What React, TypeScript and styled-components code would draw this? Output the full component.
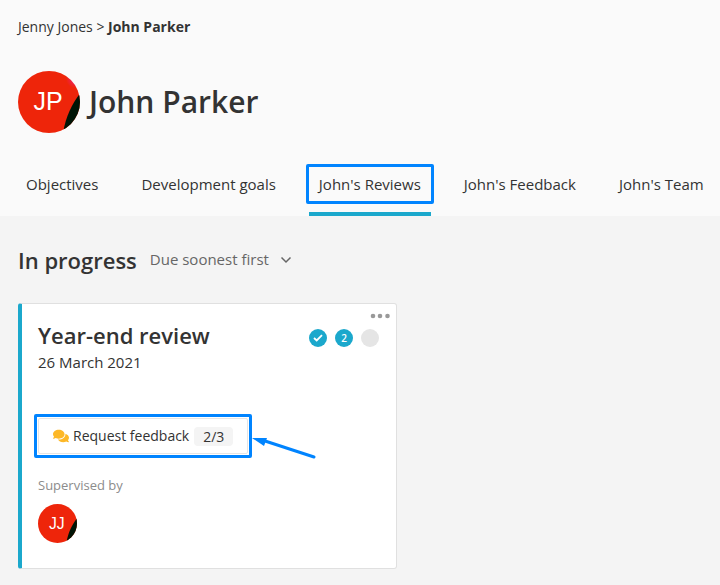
import React from "react";
import styled, { createGlobalStyle } from "styled-components";
import { FaComments } from "react-icons/fa";

const teal = "#1ba8cc";
const marker = "#0084ff";
const ink = "#333333";

const GlobalStyle = createGlobalStyle`
  *, *::before, *::after { box-sizing: border-box; }
  body {
    margin: 0;
    background: #f4f4f4;
    color: ${ink};
    font-family: "Open Sans", "Noto Sans", sans-serif;
    font-size: 15px;
    line-height: 20px;
  }
  h1, h2, h3, p, ol, ul { margin: 0; padding: 0; }
  button { font: inherit; color: inherit; }
`;

const Header = styled.header`
  background: #fafafa;
  padding: 17px 18px 0;
`;

const Breadcrumb = styled.nav`
  font-size: 14px;
  white-space: nowrap;

  a {
    color: inherit;
    text-decoration: none;
  }

  strong {
    font-weight: 700;
  }
`;

const Profile = styled.div`
  display: flex;
  align-items: center;
  gap: 9px;
  margin-top: 34px;
`;

const AvatarFrame = styled.span<{ $size: number }>`
  display: block;
  flex: none;
  width: ${(p) => p.$size}px;
  height: ${(p) => p.$size}px;

  svg {
    display: block;
    width: 100%;
    height: 100%;
  }

  text {
    font-family: "Liberation Sans", Arial, sans-serif;
    fill: #ffffff;
    text-anchor: middle;
  }
`;

const Name = styled.h1`
  font-size: 30px;
  line-height: 40px;
  font-weight: 600;
`;

const Tabs = styled.nav`
  display: flex;
  gap: 23px;
  margin: 31px 0 0 -2px;
  white-space: nowrap;
`;

const Tab = styled.a<{ $active?: boolean }>`
  position: relative;
  padding: 10px 10px 18px;
  border-bottom: 4px solid ${(p) => (p.$active ? teal : "transparent")};
  color: inherit;
  text-decoration: none;
`;

const Highlight = styled.span<{ $bottom: number; $top: number; $side: number }>`
  position: absolute;
  top: ${(p) => p.$top}px;
  bottom: ${(p) => p.$bottom}px;
  left: ${(p) => p.$side}px;
  right: ${(p) => p.$side}px;
  border: 3px solid ${marker};
  border-radius: 2px;
  pointer-events: none;
`;

const Content = styled.main`
  padding: 29px 18px 16px;
`;

const SectionHead = styled.div`
  display: flex;
  align-items: center;
  gap: 13px;
`;

const SectionTitle = styled.h2`
  font-size: 22px;
  line-height: 30px;
  font-weight: 600;
`;

const SortButton = styled.button`
  display: flex;
  align-items: center;
  gap: 11px;
  padding: 0 0 2px;
  border: 0;
  background: none;
  color: #666666;

  svg {
    position: relative;
    top: 1px;
  }
`;

const Card = styled.article`
  position: relative;
  max-width: 379px;
  margin-top: 28px;
  padding: 16px 16px 25px;
  border: 1px solid #e0e0e0;
  border-left: 4px solid ${teal};
  border-radius: 3px;
  background: #ffffff;
`;

const CardHead = styled.div`
  display: flex;
  justify-content: space-between;
  align-items: center;
`;

const CardTitle = styled.h3`
  font-size: 22px;
  line-height: 30px;
  font-weight: 600;
`;

const Steps = styled.ol`
  display: flex;
  gap: 8px;
  padding: 5px 1px 0 0;
  list-style: none;
`;

const Step = styled.li<{ $pending?: boolean }>`
  display: grid;
  place-items: center;
  width: 18px;
  height: 18px;
  border-radius: 50%;
  background: ${(p) => (p.$pending ? "#e5e5e5" : teal)};
  color: #ffffff;
  font-size: 10px;
  font-weight: 600;
  line-height: 18px;
`;

const MenuButton = styled.button`
  position: absolute;
  top: 9px;
  right: 6px;
  padding: 0;
  border: 0;
  background: none;

  svg {
    display: block;
  }
`;

const DueDate = styled.p`
  margin-top: 2px;
`;

const FeedbackRow = styled.div`
  position: relative;
  width: max-content;
  margin-top: 46px;
`;

const FeedbackButton = styled.button`
  display: flex;
  align-items: center;
  gap: 4px;
  height: 36px;
  padding: 0 14px;
  border: 1px solid #e5e5e5;
  border-radius: 2px;
  background: #ffffff;
  font-size: 14px;
`;

const Count = styled.span`
  margin-left: 1px;
  padding: 0 9px;
  border-radius: 4px;
  background: #f4f4f4;
  line-height: 19px;
`;

const Arrow = styled.svg`
  position: absolute;
  left: 100%;
  top: 16px;
  margin-left: 4px;
  pointer-events: none;
`;

const Supervised = styled.p`
  margin: 21px 0 9px;
  color: #8c8c8c;
  font-size: 13px;
`;

function Avatar({ initials, size, glow }: { initials: string; size: number; glow?: boolean }) {
  const id = `clip-${initials}`;
  return (
    <AvatarFrame $size={size}>
      <svg viewBox="0 0 62 62" role="img" aria-label={initials}>
        <defs>
          <clipPath id={id}>
            <circle cx="31" cy="31" r="31" />
          </clipPath>
          <radialGradient id={`${id}-edge`} cx="57" cy="8" r="9" gradientUnits="userSpaceOnUse">
            <stop offset="0" stopColor="#f0207a" />
            <stop offset="1" stopColor="#ee250a" />
          </radialGradient>
        </defs>
        <g clipPath={`url(#${id})`}>
          <rect width="62" height="62" fill={glow ? `url(#${id}-edge)` : "#ee250a"} />
          <path d="M64 20C55 31 48 44 45 62H64Z" fill="#001405" />
        </g>
        <text x="30" y="39" fontSize="25">
          {initials}
        </text>
      </svg>
    </AvatarFrame>
  );
}

const tabs = ["Objectives", "Development goals", "John's Reviews", "John's Feedback", "John's Team"];

export default function App() {
  return (
    <>
      <GlobalStyle />
      <Header>
        <Breadcrumb aria-label="Breadcrumb">
          <a href="#jenny">Jenny Jones</a> &gt; <strong>John Parker</strong>
        </Breadcrumb>
        <Profile>
          <Avatar initials="JP" size={62} glow />
          <Name>John Parker</Name>
        </Profile>
        <Tabs aria-label="Profile sections">
          {tabs.map((label, i) => (
            <Tab key={label} href={`#tab-${i}`} $active={i === 2} aria-current={i === 2 ? "page" : undefined}>
              {label}
              {i === 2 && <Highlight $top={0} $bottom={8} $side={-3} />}
            </Tab>
          ))}
        </Tabs>
      </Header>
      <Content>
        <SectionHead>
          <SectionTitle>In progress</SectionTitle>
          <SortButton type="button">
            Due soonest first
            <svg width="12" height="8" viewBox="0 0 12 8" fill="none" stroke="#666666" strokeWidth="1.5" aria-hidden="true">
              <path d="M1.5 1.5L6 6L10.5 1.5" />
            </svg>
          </SortButton>
        </SectionHead>
        <Card>
          <MenuButton type="button" aria-label="More options">
            <svg width="20" height="6" viewBox="0 0 20 6" fill="#999999" aria-hidden="true">
              <circle cx="3" cy="3" r="2.3" />
              <circle cx="10" cy="3" r="2.3" />
              <circle cx="17.500" cy="3" r="2.3" />
            </svg>
          </MenuButton>
          <CardHead>
            <CardTitle>Year-end review</CardTitle>
            <Steps aria-label="Progress">
              <Step aria-label="Step 1 complete">
                <svg width="10" height="8" viewBox="0 0 10 8" fill="none" stroke="#ffffff" strokeWidth="1.8" aria-hidden="true">
                  <path d="M1 4L3.7 6.5L9 1.2" />
                </svg>
              </Step>
              <Step>2</Step>
              <Step $pending aria-label="Step 3 pending" />
            </Steps>
          </CardHead>
          <DueDate>26 March 2021</DueDate>
          <FeedbackRow>
            <FeedbackButton type="button">
              <FaComments size={16} color="#fdb827" aria-hidden="true" />
              Request feedback
              <Count>2/3</Count>
            </FeedbackButton>
            <Highlight $top={-4} $bottom={-4} $side={-4} />
            <Arrow width="66" height="26" viewBox="0 0 66 26" aria-hidden="true">
              <path d="M10 6L62 23" stroke={marker} strokeWidth="3" strokeLinecap="round" />
              <path d="M0 4L15 4L12 12Z" fill={marker} />
            </Arrow>
          </FeedbackRow>
          <Supervised>Supervised by</Supervised>
          <Avatar initials="JJ" size={39} />
        </Card>
      </Content>
    </>
  );
}
